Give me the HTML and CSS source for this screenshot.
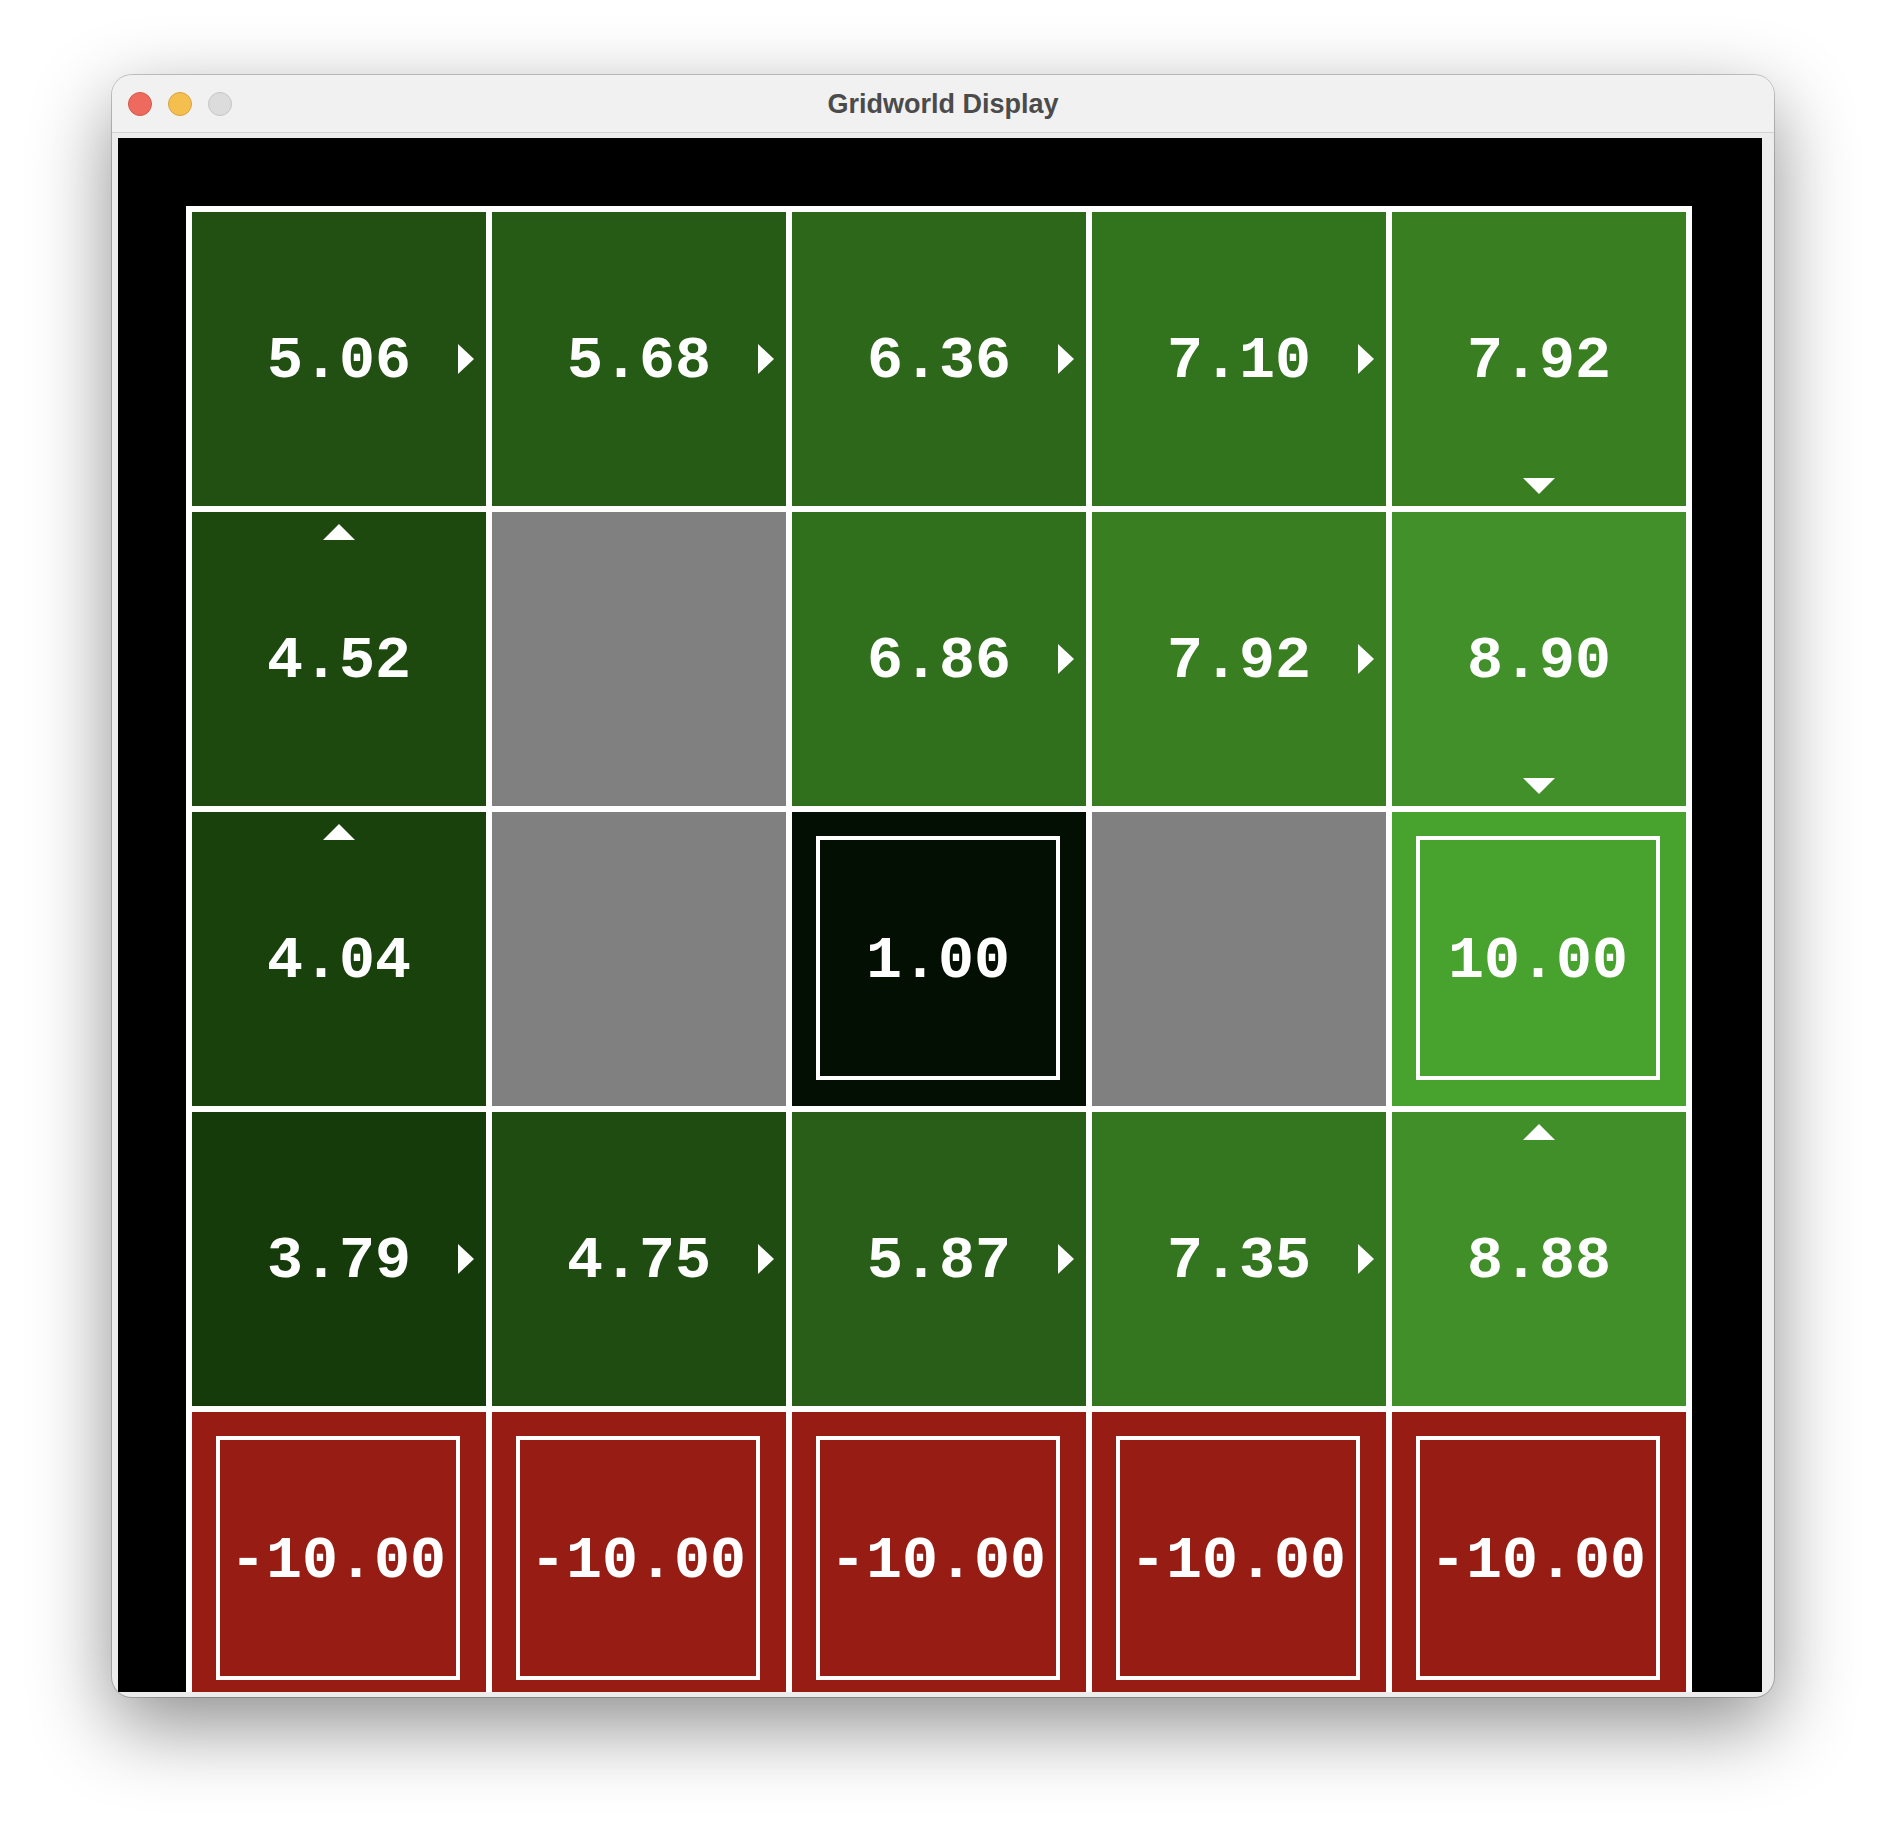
FILE: index.html
```html
<!DOCTYPE html>
<html>
<head>
<meta charset="utf-8">
<title>Gridworld Display</title>
<link rel="stylesheet" href="styles.css">
</head>
<body>
<div class="window">
  <div class="titlebar">
    <div class="lights">
      <span class="light red"></span>
      <span class="light yellow"></span>
      <span class="light gray"></span>
    </div>
    <div class="title">Gridworld Display</div>
    <div class="spacer"></div>
  </div>
  <div class="frame">
    <div class="canvas">
      <div class="grid">
        <div class="cell c506"><span class="val">5.06</span><span class="arrow right"></span></div>
        <div class="cell c568"><span class="val">5.68</span><span class="arrow right"></span></div>
        <div class="cell c636"><span class="val">6.36</span><span class="arrow right"></span></div>
        <div class="cell c710"><span class="val">7.10</span><span class="arrow right"></span></div>
        <div class="cell c792"><span class="val">7.92</span><span class="arrow down"></span></div>

        <div class="cell c452"><span class="val">4.52</span><span class="arrow up"></span></div>
        <div class="cell wall"></div>
        <div class="cell c686"><span class="val">6.86</span><span class="arrow right"></span></div>
        <div class="cell c792"><span class="val">7.92</span><span class="arrow right"></span></div>
        <div class="cell c890"><span class="val">8.90</span><span class="arrow down"></span></div>

        <div class="cell c404"><span class="val">4.04</span><span class="arrow up"></span></div>
        <div class="cell wall"></div>
        <div class="cell terminal c100"><div class="box"><span class="val">1.00</span></div></div>
        <div class="cell wall"></div>
        <div class="cell terminal c1000"><div class="box"><span class="val">10.00</span></div></div>

        <div class="cell c379"><span class="val">3.79</span><span class="arrow right"></span></div>
        <div class="cell c475"><span class="val">4.75</span><span class="arrow right"></span></div>
        <div class="cell c587"><span class="val">5.87</span><span class="arrow right"></span></div>
        <div class="cell c735"><span class="val">7.35</span><span class="arrow right"></span></div>
        <div class="cell c888"><span class="val">8.88</span><span class="arrow up"></span></div>

        <div class="cell terminal neg"><div class="box"><span class="val">-10.00</span></div></div>
        <div class="cell terminal neg"><div class="box"><span class="val">-10.00</span></div></div>
        <div class="cell terminal neg"><div class="box"><span class="val">-10.00</span></div></div>
        <div class="cell terminal neg"><div class="box"><span class="val">-10.00</span></div></div>
        <div class="cell terminal neg"><div class="box"><span class="val">-10.00</span></div></div>
      </div>
    </div>
  </div>
</div>
</body>
</html>
```

FILE: styles.css
```css
html, body {
  margin: 0;
  padding: 0;
  background: #ffffff;
}

body {
  width: 1886px;
  height: 1846px;
  overflow: hidden;
}

.window {
  margin: 75px 0 0 112px;
  width: 1662px;
  height: 1622px;
  border-radius: 20px;
  overflow: hidden;
  background: #ececec;
  box-shadow: 0 0 0 1px rgba(0, 0, 0, 0.2), 0 28px 80px rgba(0, 0, 0, 0.45);
  display: flex;
  flex-direction: column;
}

.titlebar {
  height: 57px;
  flex: none;
  background: #f1f1f2;
  border-bottom: 1px solid #d2d2d2;
  display: grid;
  grid-template-columns: 1fr auto 1fr;
  align-items: center;
}

.lights {
  display: flex;
  gap: 16px;
  padding-left: 16px;
}

.light {
  width: 24px;
  height: 24px;
  border-radius: 50%;
  box-sizing: border-box;
}

.light.red {
  background: #ee6a5e;
  border: 1px solid #d4574b;
}

.light.yellow {
  background: #f5bf4f;
  border: 1px solid #d9a23e;
}

.light.gray {
  background: #dcdcdc;
  border: 1px solid #c4c4c4;
}

.title {
  font-family: "Liberation Sans", Arial, sans-serif;
  font-weight: bold;
  font-size: 27px;
  color: #4b4b4b;
  padding-top: 1px;
}

.frame {
  flex: 1;
  padding: 5px 12px 5px 6px;
  display: flex;
}

.canvas {
  width: 1644px;
  height: 1554px;
  background: #000000;
  overflow: hidden;
  padding: 68px 0 0 68px;
  box-sizing: border-box;
}

.grid {
  display: grid;
  grid-template-columns: repeat(5, 294px);
  grid-auto-rows: 294px;
  gap: 6px;
  padding: 6px;
  background: #ffffff;
  width: max-content;
}

.cell {
  position: relative;
  display: flex;
  align-items: center;
  justify-content: center;
  box-sizing: border-box;
}

.val {
  font-family: "Liberation Mono", "Courier New", monospace;
  font-weight: bold;
  font-size: 60px;
  line-height: 1.133;
  color: #ffffff;
  white-space: pre;
  padding-top: 5px;
}

.terminal {
  padding: 24px 26px 26px 24px;
  align-items: stretch;
  justify-content: stretch;
}

.box {
  flex: 1;
  border: 4px solid #ffffff;
  display: flex;
  align-items: center;
  justify-content: center;
}

.box .val {
  padding-top: 8px;
}

.arrow {
  position: absolute;
  width: 0;
  height: 0;
}

.arrow.right {
  right: 12px;
  top: 50%;
  margin-top: -15px;
  border-left: 16px solid #ffffff;
  border-top: 15px solid transparent;
  border-bottom: 15px solid transparent;
}

.arrow.down {
  bottom: 12px;
  left: 50%;
  margin-left: -16px;
  border-top: 16px solid #ffffff;
  border-left: 16px solid transparent;
  border-right: 16px solid transparent;
}

.arrow.up {
  top: 12px;
  left: 50%;
  margin-left: -16px;
  border-bottom: 16px solid #ffffff;
  border-left: 16px solid transparent;
  border-right: 16px solid transparent;
}

.wall { background: #808080; }
.neg { background: #971c14; }
.c100 { background: #020f02; }
.c1000 { background: #48a22e; }
.c379 { background: #163b0a; }
.c404 { background: #19410c; }
.c452 { background: #1d490f; }
.c475 { background: #1e4c11; }
.c506 { background: #215012; }
.c568 { background: #265b16; }
.c587 { background: #285e17; }
.c636 { background: #2c671a; }
.c686 { background: #306f1c; }
.c710 { background: #32731e; }
.c735 { background: #34761f; }
.c792 { background: #397f22; }
.c888 { background: #408f29; }
.c890 { background: #41902a; }
```
